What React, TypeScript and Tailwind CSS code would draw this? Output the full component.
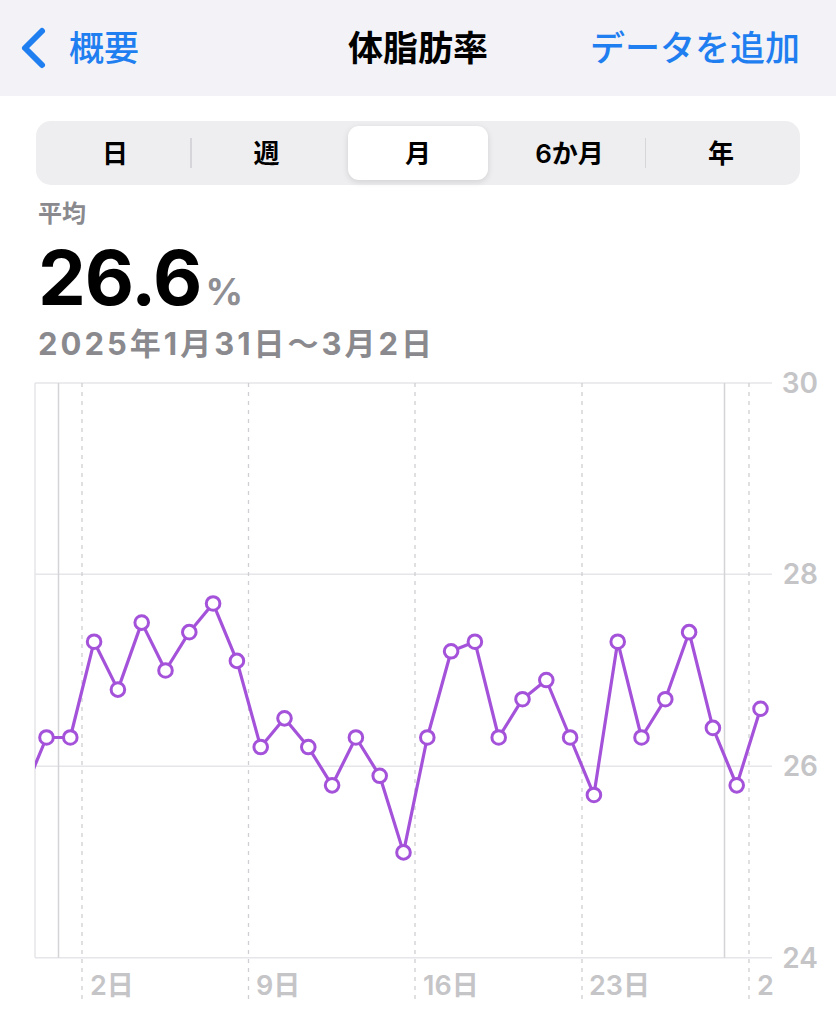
import React from "react";

const values = [
  26.3, 26.3, 27.3, 26.8, 27.5, 27.0, 27.4, 27.7, 27.1, 26.2, 26.5, 26.2, 25.8,
  26.3, 25.9, 25.1, 26.3, 27.2, 27.3, 26.3, 26.7, 26.9, 26.3, 25.7, 27.3, 26.3,
  26.7, 27.4, 26.4, 25.8, 26.6,
];

const yOf = (v: number) => 957.7 - (v - 24) * 95.75;
const xOf = (i: number) => 46.5 + i * 23.8;

function Chart() {
  const pts = values.map((v, i) => [xOf(i), yOf(v)] as const);
  const linePts = [[xOf(-1), yOf(25.7)] as const, ...pts]
    .map((p) => `${p[0].toFixed(1)},${p[1].toFixed(1)}`)
    .join(" ");
  const grid = [
    { y: 383, l: "30" },
    { y: 574.2, l: "28" },
    { y: 766.2, l: "26" },
    { y: 957.7, l: "24" },
  ];
  const dashed = [82, 248.5, 415, 582, 749];
  const xl = [
    { x: 90, t: "2日" },
    { x: 256, t: "9日" },
    { x: 423, t: "16日" },
    { x: 589, t: "23日" },
    { x: 757, t: "2" },
  ];
  const purple = "#a452da";
  return (
    <svg
      className="block"
      width={836}
      height={668}
      viewBox="0 356 836 668"
    >
      <defs>
        <clipPath id="plot">
          <rect x={35} y={370} width={737} height={600} />
        </clipPath>
      </defs>
      {grid.map((g) => (
        <line
          key={g.l}
          x1={35}
          x2={772}
          y1={g.y}
          y2={g.y}
          stroke="#e6e6ea"
          strokeWidth={1.5}
        />
      ))}
      <line x1={35} x2={35} y1={383} y2={957.7} stroke="#e6e6ea" strokeWidth={1.5} />
      <line x1={58.5} x2={58.5} y1={383} y2={957.7} stroke="#d4d4d8" strokeWidth={1.5} />
      <line x1={724.5} x2={724.5} y1={383} y2={957.7} stroke="#d4d4d8" strokeWidth={1.5} />
      {dashed.map((x) => (
        <line
          key={x}
          x1={x}
          x2={x}
          y1={383}
          y2={1004}
          stroke="#cfcfd3"
          strokeWidth={1.3}
          strokeDasharray="4 5"
        />
      ))}
      {grid.map((g) => (
        <text
          key={"t" + g.l}
          x={818}
          y={g.y + 10}
          textAnchor="end"
          fontFamily="Inter, sans-serif"
          fontWeight={600}
          fontSize={28}
          fill="#c5c5c8"
        >
          {g.l}
        </text>
      ))}
      {xl.map((l) => (
        <text
          key={l.t}
          x={l.x}
          y={995}
          fontFamily="Inter, 'Noto Sans CJK JP', sans-serif"
          fontWeight={600}
          fontSize={27}
          fill="#c5c5c8"
        >
          {l.t}
        </text>
      ))}
      <g clipPath="url(#plot)">
        <polyline
          points={linePts}
          fill="none"
          stroke={purple}
          strokeWidth={3.2}
          strokeLinejoin="round"
          strokeLinecap="round"
        />
      </g>
      {pts.map((p, i) => (
        <circle
          key={i}
          cx={p[0]}
          cy={p[1]}
          r={6.8}
          fill="#ffffff"
          stroke={purple}
          strokeWidth={3}
        />
      ))}
    </svg>
  );
}

function Segmented() {
  const Seg = ({ t, sel }: { t: string; sel?: boolean }) => (
    <div className="flex-1 flex">
      <div
        className={
          sel
            ? "flex-1 mx-[5px] flex items-center justify-center rounded-[11px] bg-white shadow-[0_2px_6px_rgba(0,0,0,0.12)] text-[26px] font-semibold text-black"
            : "flex-1 flex items-center justify-center text-[26px] font-semibold text-black"
        }
      >
        {t}
      </div>
    </div>
  );
  const Div = ({ show }: { show?: boolean }) => (
    <div
      className={
        show
          ? "w-[1.5px] h-[30px] self-center bg-[#d6d6da]"
          : "w-[1.5px] h-[30px] self-center"
      }
    />
  );
  return (
    <div className="mx-[36px] mt-[25px] h-[64px] rounded-[15px] bg-[#eeeef0] px-[4px] py-[5px] flex">
      <Seg t="日" />
      <Div show />
      <Seg t="週" />
      <Div />
      <Seg t="月" sel />
      <Div />
      <Seg t="6か月" />
      <Div show />
      <Seg t="年" />
    </div>
  );
}

export default function App() {
  return (
    <div className="w-[836px] h-[1024px] bg-white overflow-hidden font-[Inter,'Noto_Sans_CJK_JP',sans-serif]">
      <div className="h-[96px] bg-[#f2f2f7] grid grid-cols-[1fr_auto_1fr] items-center">
        <div className="flex items-center pl-[19px]">
          <svg width="28" height="44" viewBox="0 0 28 44">
            <polyline
              points="23,5 6,22 23,39"
              fill="none"
              stroke="#1f7ef0"
              strokeWidth={6}
              strokeLinecap="round"
              strokeLinejoin="round"
            />
          </svg>
          <span className="ml-[22px] text-[35px] text-[#1f7ef0] font-medium leading-none">
            概要
          </span>
        </div>
        <div className="text-[35px] font-bold text-black leading-none">
          体脂肪率
        </div>
        <div className="flex justify-end pr-[36px]">
          <span className="text-[35px] text-[#1f7ef0] font-medium leading-none">
            データを追加
          </span>
        </div>
      </div>
      <Segmented />
      <div className="px-[38px]">
        <div className="mt-[10px] h-[38px] leading-[38px] text-[24px] font-bold text-[#8a8a8e]">
          平均
        </div>
        <div className="mt-[4px] h-[80px] flex items-baseline">
          <span className="text-[76px] leading-[80px] font-bold text-black tracking-[-1px]">
            26.6
          </span>
          <span className="ml-[4px] text-[37px] font-bold text-[#8e8e93]">%</span>
        </div>
        <div className="mt-[8px] h-[38px] leading-[38px] text-[31px] font-bold text-[#8a8a8e] tracking-[3px]">
          2025年1月31日〜3月2日
        </div>
      </div>
      <div className="-mt-[7px]">
        <Chart />
      </div>
    </div>
  );
}
